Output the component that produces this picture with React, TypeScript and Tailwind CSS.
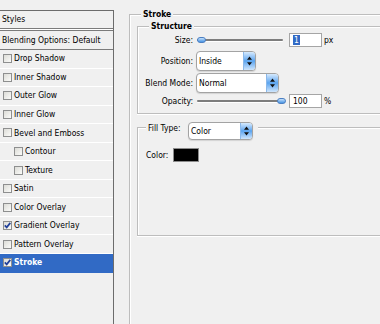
import type { ReactNode } from 'react';
import clsx from 'clsx';

type Effect = {
  label: string;
  sub?: boolean;
  checked?: boolean;
  active?: boolean;
};

const effects: Effect[] = [
  { label: 'Drop Shadow' },
  { label: 'Inner Shadow' },
  { label: 'Outer Glow' },
  { label: 'Inner Glow' },
  { label: 'Bevel and Emboss' },
  { label: 'Contour', sub: true },
  { label: 'Texture', sub: true },
  { label: 'Satin' },
  { label: 'Color Overlay' },
  { label: 'Gradient Overlay', checked: true },
  { label: 'Pattern Overlay' },
  { label: 'Stroke', checked: true, active: true },
];

function CheckBox({ checked }: { checked?: boolean }) {
  return (
    <span className="flex h-[9px] w-[9px] shrink-0 items-center justify-center border border-[#8e8f8f] bg-linear-to-br from-[#dcdcd7] to-[#fbfbf9]">
      {checked && (
        <svg width="7" height="7" viewBox="0 0 7 7" className="block">
          <path d="M0.8 3.4 L2.7 5.4 L6.3 0.9" fill="none" stroke="#21409a" strokeWidth="1.7" />
        </svg>
      )}
    </span>
  );
}

function EffectRow({ effect }: { effect: Effect }) {
  return (
    <div
      className={clsx(
        'flex h-[18.55px] shrink-0 items-center gap-[2px] border-b',
        effect.active ? 'border-[#316ac5] bg-[#316ac5] font-bold text-white' : 'border-white',
        effect.sub ? 'pl-[14px]' : 'pl-[3px]',
      )}
    >
      <CheckBox checked={effect.checked} />
      <span>{effect.label}</span>
    </div>
  );
}

// groupbox line pieces: gray line with a white line under it (etched look)
function LineLead({ className }: { className: string }) {
  return (
    <div className={`flex shrink-0 flex-col ${className}`}>
      <div className="h-[5px] shrink-0" />
      <div className="flex-1 border-t border-l border-[#bdbdbd] shadow-[inset_1px_1px_0_#fff]" />
    </div>
  );
}

function LineTail({ className = '' }: { className?: string }) {
  return (
    <div className={`flex flex-1 flex-col ${className}`}>
      <div className="h-[5px] shrink-0" />
      <div className="h-[2px] border-t border-[#bdbdbd] bg-white" />
    </div>
  );
}

function Arrows() {
  return (
    <svg width="7" height="12" viewBox="0 0 7 12" className="block">
      <path d="M3.5 1.5 L6 4.8 L1 4.8 Z M1 7.2 L6 7.2 L3.5 10.5 Z" fill="#111" />
    </svg>
  );
}

function Select({ value, className }: { value: string; className: string }) {
  return (
    <div
      className={`flex shrink-0 overflow-hidden rounded-[4px] border border-[#a3a3a3] bg-white shadow-[0_1px_1px_rgba(0,0,0,0.12)] ${className}`}
    >
      <span className="flex-1 self-center pl-[2px]">{value}</span>
      <span className="flex w-[12px] items-center justify-center border-l border-[#8ab8ea] bg-linear-to-b from-[#d6eafd] via-[#5aa4ef] to-[#cfe6fc]">
        <Arrows />
      </span>
    </div>
  );
}

function Slider({ at, className }: { at: 'start' | 'end'; className: string }) {
  return (
    <div className={`relative flex h-[8px] w-[88px] shrink-0 items-center ${className}`}>
      <div className="mx-[1px] h-[2px] flex-1 rounded-full bg-[#7d7d7d] shadow-[0_1px_0_#fff]" />
      <div
        className={clsx(
          'absolute top-[1px] h-[6px] w-[9px] rounded-full border border-[#4c7fc2] bg-linear-to-b from-[#c4e1fc] to-[#4593e2]',
          at === 'start' ? 'left-[1px]' : 'right-[-2px]',
        )}
      />
    </div>
  );
}

function NumberBox({ children, className }: { children: ReactNode; className: string }) {
  return (
    <div
      className={`flex h-[14px] w-[33px] shrink-0 items-center border border-[#a5a5a5] bg-white pl-[3px] ${className}`}
    >
      {children}
    </div>
  );
}

export default function App() {
  return (
    <div className="flex h-[324px] w-[380px] overflow-hidden bg-[#f0f0f0] font-['DejaVu_Sans_Condensed','Liberation_Sans',sans-serif] text-[8.5px] text-black">
      <aside className="mt-[10px] flex w-[114px] shrink-0 flex-col border-t border-r border-[#6c6c6c]">
        <div className="flex h-[18px] shrink-0 items-center border-b border-[#7b7b7b] pl-[2px]">Styles</div>
        <div className="h-[1px] shrink-0 bg-white" />
        <div className="flex h-[20px] shrink-0 items-center border-y border-[#7b7b7b] pl-[2px]">
          Blending Options: Default
        </div>
        {effects.map((effect) => (
          <EffectRow key={effect.label} effect={effect} />
        ))}
      </aside>

      <main className="mt-[9px] ml-[15px] flex w-[300px] shrink-0 flex-col">
        <div className="flex h-[11px] shrink-0">
          <LineLead className="w-[12px]" />
          <span className="px-[2px] leading-[11px] font-bold">Stroke</span>
          <LineTail />
        </div>

        <div className="flex flex-1 flex-col border-l border-[#bdbdbd] pl-[7px] shadow-[inset_1px_0_0_#fff]">
          {/* Structure */}
          <div className="mt-[1px]">
            <div className="flex h-[11px]">
              <LineLead className="w-[12px]" />
              <span className="px-[2px] leading-[11px] font-bold">Structure</span>
              <LineTail />
            </div>
            <div className="border-b border-l border-[#bdbdbd] pt-[1px] pb-[5px] shadow-[inset_1px_0_0_#fff,0_1px_0_#fff]">
              <div className="flex h-[14px] items-center">
                <span className="w-[55px] text-right">Size:</span>
                <Slider at="start" className="ml-[3px]" />
                <NumberBox className="ml-[5px]">
                  <span className="bg-[#316ac5] px-[1px] leading-[10px] text-white">1</span>
                </NumberBox>
                <span className="ml-[2px]">px</span>
              </div>
              <div className="mt-[4px] flex h-[20px] items-center">
                <span className="w-[55px] text-right">Position:</span>
                <Select value="Inside" className="ml-[3px] h-[20px] w-[60px]" />
              </div>
              <div className="mt-[2px] flex h-[20px] items-center">
                <span className="w-[55px] text-right">Blend Mode:</span>
                <Select value="Normal" className="ml-[3px] h-[20px] w-[83px]" />
              </div>
              <div className="mt-[1px] flex h-[14px] items-center">
                <span className="w-[55px] text-right">Opacity:</span>
                <Slider at="end" className="ml-[3px]" />
                <NumberBox className="ml-[5px]">100</NumberBox>
                <span className="ml-[2px]">%</span>
              </div>
            </div>
          </div>

          {/* Fill */}
          <div className="mt-[8px]">
            <div className="flex h-[18px]">
              <LineLead className="w-[9px]" />
              <span className="mt-[1px] w-[40px] shrink-0 self-start pl-[2px] leading-[11px]">Fill Type:</span>
              <Select value="Color" className="ml-[2px] h-[18px] w-[65px]" />
              <LineTail className="ml-[5px]" />
            </div>
            <div className="border-b border-l border-[#bdbdbd] pt-[8px] pb-[73px] pl-[8px] shadow-[inset_1px_0_0_#fff,0_1px_0_#fff]">
              <div className="flex h-[14px] items-center gap-[4px]">
                <span className="w-[23px]">Color:</span>
                <span className="h-[14px] w-[26px] border border-[#8c8c8c] bg-black" />
              </div>
            </div>
          </div>
        </div>
      </main>
    </div>
  );
}
